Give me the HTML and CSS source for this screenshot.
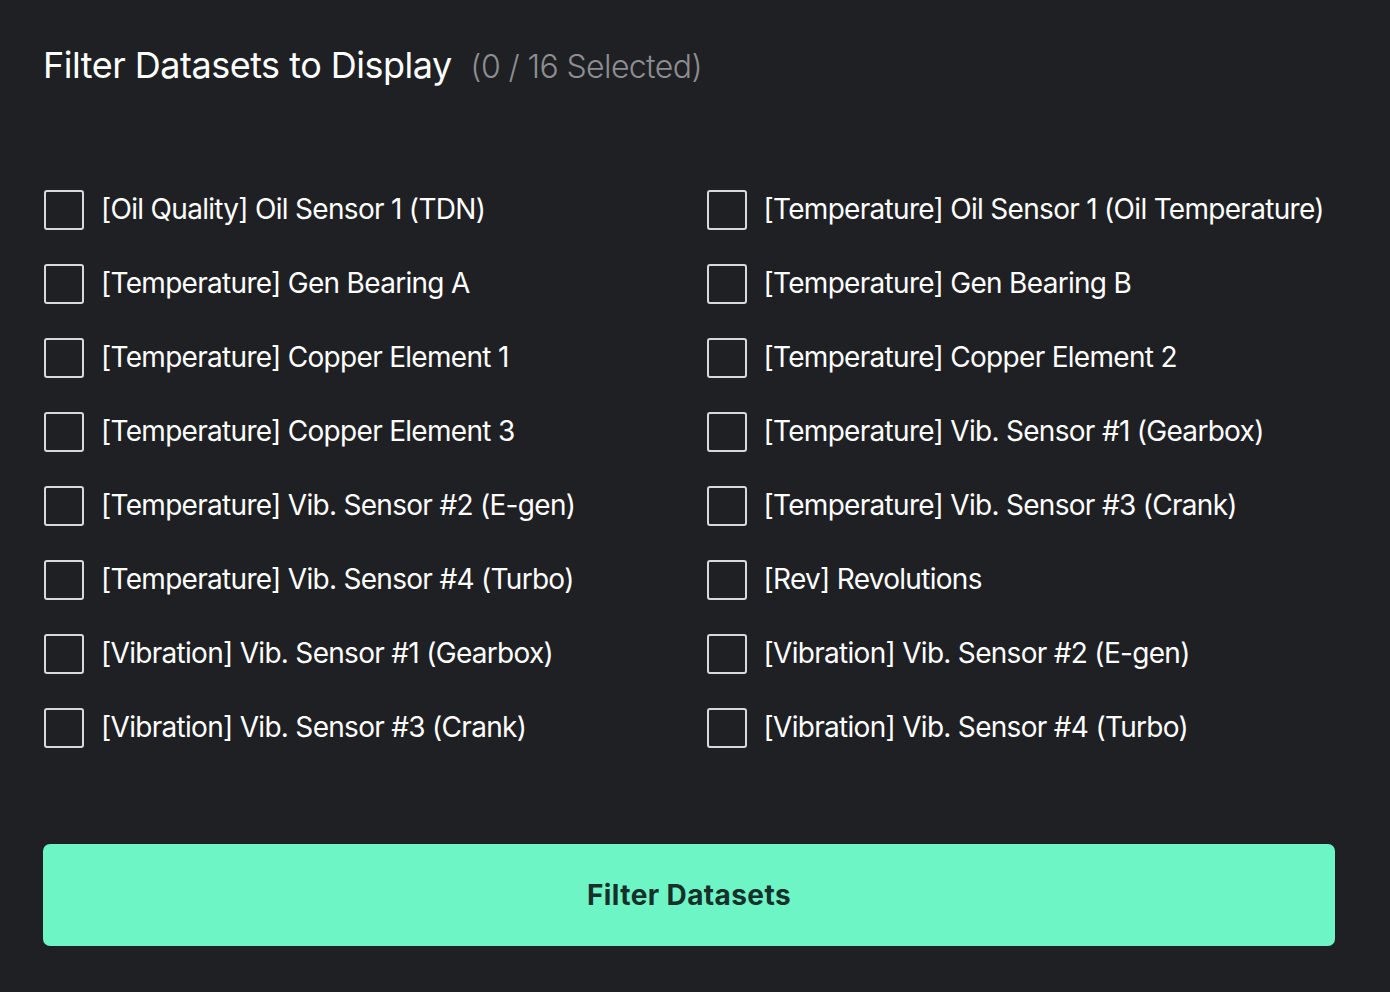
FILE: index.html
```html
<!DOCTYPE html>
<html lang="en">
<head>
    <meta charset="UTF-8">
    <title>Filter Datasets</title>
    <link rel="stylesheet" href="styles.css">
</head>
<body>
    <!-- painel de filtro dos datasets -->
    <form class="painel" name="Filtro">
        <h1 class="titulo">Filter Datasets to Display <span class="contagem">(0 / 16 Selected)</span></h1>

        <div class="lista">
            <label class="item"><input type="checkbox"><span>[Oil Quality] Oil Sensor 1 (TDN)</span></label>
            <label class="item"><input type="checkbox"><span>[Temperature] Oil Sensor 1 (Oil Temperature)</span></label>
            <label class="item"><input type="checkbox"><span>[Temperature] Gen Bearing A</span></label>
            <label class="item"><input type="checkbox"><span>[Temperature] Gen Bearing B</span></label>
            <label class="item"><input type="checkbox"><span>[Temperature] Copper Element 1</span></label>
            <label class="item"><input type="checkbox"><span>[Temperature] Copper Element 2</span></label>
            <label class="item"><input type="checkbox"><span>[Temperature] Copper Element 3</span></label>
            <label class="item"><input type="checkbox"><span>[Temperature] Vib. Sensor #1 (Gearbox)</span></label>
            <label class="item"><input type="checkbox"><span>[Temperature] Vib. Sensor #2 (E-gen)</span></label>
            <label class="item"><input type="checkbox"><span>[Temperature] Vib. Sensor #3 (Crank)</span></label>
            <label class="item"><input type="checkbox"><span>[Temperature] Vib. Sensor #4 (Turbo)</span></label>
            <label class="item"><input type="checkbox"><span>[Rev] Revolutions</span></label>
            <label class="item"><input type="checkbox"><span>[Vibration] Vib. Sensor #1 (Gearbox)</span></label>
            <label class="item"><input type="checkbox"><span>[Vibration] Vib. Sensor #2 (E-gen)</span></label>
            <label class="item"><input type="checkbox"><span>[Vibration] Vib. Sensor #3 (Crank)</span></label>
            <label class="item"><input type="checkbox"><span>[Vibration] Vib. Sensor #4 (Turbo)</span></label>
        </div>

        <button type="button" class="botao">Filter Datasets</button>
    </form>
</body>
</html>
```

FILE: styles.css
```css
body{
    margin: 0;
    background-color: #1f2023;
    font-family: Inter, "Noto Sans", sans-serif;
    color: #fff;
}
.painel{
    padding: 42px 55px 46px 43px;
}
.titulo{
    margin: 0;
    font-size: 36px;
    font-weight: 400;
    letter-spacing: -0.5px;
    line-height: 46px;
}
.contagem{
    margin-left: 9px;
    font-size: 32px;
    font-weight: 300;
    color: #8d8e91;
    letter-spacing: -0.6px;
}
.lista{
    display: grid;
    grid-template-columns: minmax(0, 1fr) minmax(0, 1fr);
    column-gap: 33px;
    row-gap: 34px;
    margin-top: 100px;
}
.item{
    display: flex;
    align-items: center;
    gap: 17px;
    height: 40px;
    font-size: 28px;
    font-weight: 400;
    letter-spacing: -0.7px;
    white-space: nowrap;
}
.item span{
    margin-top: -3px;
}
.item input{
    appearance: none;
    margin: 0 0 0 1px;
    width: 40px;
    height: 40px;
    border: 2px solid #d9d9dc;
    border-radius: 3px;
    background: transparent;
    flex-shrink: 0;
}
.botao{
    display: block;
    width: 100%;
    height: 102px;
    margin-top: 96px;
    border: none;
    border-radius: 7px;
    background-color: #6ef5c6;
    color: #17302a;
    font-family: Inter, "Noto Sans", sans-serif;
    font-size: 28px;
    font-weight: 700;
    letter-spacing: 0.4px;
}
```
